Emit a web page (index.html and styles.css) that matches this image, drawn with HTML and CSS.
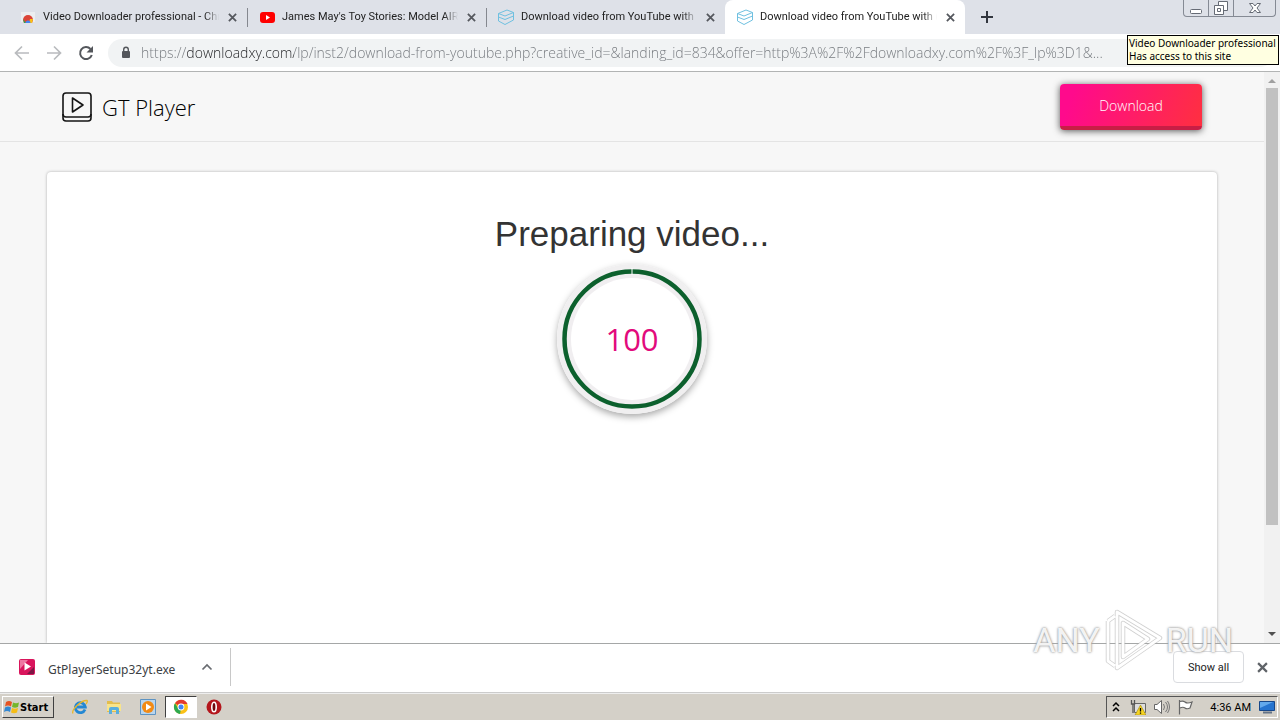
FILE: index.html
```html
<!DOCTYPE html>
<html lang="en">
<head>
<meta charset="utf-8">
<title>Download video from YouTube with GT Player</title>
<link rel="stylesheet" href="styles.css">
</head>
<body>
<svg class="defs" aria-hidden="true">
  <symbol id="x" viewBox="0 0 10 10"><path d="M1 1l8 8M9 1l-8 8" fill="none" stroke="currentColor" stroke-width="2"/></symbol>
  <symbol id="box" viewBox="0 0 16 16"><path d="M.5 4.500L9 1l6.500 2.500L7 7zM.5 4.500V8L7 10.500 15.500 7M.5 8v4L7 15.500l8.500-4.500V3.500" fill="none" stroke="#6fc0e0" stroke-width="1"/></symbol>
  <symbol id="chrome" viewBox="0 0 16 16"><circle cx="8" cy="8" r="7" fill="#fbc116"/><path d="M8 8L2 4.300A7 7 0 0 1 14.500 5H8z" fill="#e33b2e"/><path d="M2 4.300L5.500 10l2.500 0-1 5A7 7 0 0 1 2 4.300z" fill="#2da94f"/><circle cx="8" cy="8" r="3.400" fill="#fff"/><circle cx="8" cy="8" r="2.500" fill="#4285f4"/></symbol>
</svg>

<header class="tabstrip">
  <div class="tabs">
    <div class="tab">
      <svg class="favicon" viewBox="0 0 16 16"><path d="M1 3h14v10H1z" fill="#eceef0"/><path d="M3 11a5 5 0 0 1 10 0l-1 3H4z" fill="#db4437"/><path d="M3 10l3 4H4z" fill="#2da94f"/><path d="M10 10h3l-1 4H9z" fill="#fbc116"/><path d="M5.500 14a2.500 2.500 0 0 1 5 0z" fill="#4285f4"/></svg>
      <span class="tab-title">Video Downloader professional - Chr</span>
      <button class="tab-close" aria-label="Close tab"><svg><use href="#x"/></svg></button>
    </div>
    <div class="tab">
      <svg class="favicon" viewBox="0 0 16 16"><rect x="1" y="3" width="15" height="11" rx="3" fill="#f00"/><path d="M7 6l4 2.500L7 11z" fill="#fff"/></svg>
      <span class="tab-title">James May's Toy Stories: Model AIR</span>
      <button class="tab-close" aria-label="Close tab"><svg><use href="#x"/></svg></button>
    </div>
    <div class="tab tab-last">
      <svg class="favicon"><use href="#box"/></svg>
      <span class="tab-title">Download video from YouTube with (</span>
      <button class="tab-close" aria-label="Close tab"><svg><use href="#x"/></svg></button>
    </div>
    <div class="tab tab-active">
      <svg class="favicon"><use href="#box"/></svg>
      <span class="tab-title">Download video from YouTube with (</span>
      <button class="tab-close" aria-label="Close tab"><svg><use href="#x"/></svg></button>
    </div>
  </div>
  <button class="new-tab" aria-label="New tab"><svg viewBox="0 0 12 12"><path d="M6 0v12M0 6h12" stroke="#32363f" stroke-width="2"/></svg></button>
  <div class="window-controls">
    <button aria-label="Minimize"><svg viewBox="0 0 14 14"><rect x="1.500" y="8.500" width="11" height="4" rx="1" fill="#fff" stroke="#666b75"/></svg></button>
    <button aria-label="Restore"><svg viewBox="0 0 14 14"><g fill="#fff" stroke="#666b75"><path d="M4.500 .5h9v9h-9z"/><path d="M.5 4.500h9v9h-9z"/><path d="M3.500 7.500h3v3h-3z"/></g></svg></button>
    <button class="window-close" aria-label="Close"><svg viewBox="0 0 14 14"><path d="M1.500 2.500h3.500l2 2.500 2-2.500h3.500L9 7l3.500 4.500H9L7 9l-2 2.500H1.500L5 7z" fill="#fff" stroke="#666b75"/></svg></button>
  </div>
</header>

<nav class="toolbar">
  <button class="nav-button" aria-label="Back"><svg viewBox="0 0 16 16"><path d="M15 8H2M8 1.500L1.500 8 8 14.500" fill="none" stroke="#b9bbbe" stroke-width="1.700"/></svg></button>
  <button class="nav-button" aria-label="Forward"><svg viewBox="0 0 16 16"><path d="M1 8h13M8 1.500L14.500 8 8 14.500" fill="none" stroke="#b9bbbe" stroke-width="1.700"/></svg></button>
  <button class="nav-button" aria-label="Reload"><svg viewBox="0 0 16 16"><path d="M13.800 10A6 6 0 1 1 12.500 4" fill="none" stroke="#54575c" stroke-width="2"/><path d="M15 1v6.500H8.500z" fill="#54575c"/></svg></button>
  <div class="omnibox">
    <svg class="lock" viewBox="0 0 10 13"><rect x="1" y="5" width="8" height="7" rx="1" fill="#54575c"/><path d="M2.700 6V3.500a2.300 2.300 0 0 1 4.600 0V6" fill="none" stroke="#54575c" stroke-width="1.400"/></svg>
    <input class="url" type="text" aria-label="Address" value="https://downloadxy.com/lp/inst2/download-from-youtube.php?creative_id=&amp;landing_id=834&amp;offer=http%3A%2F%2Fdownloadxy.com%2F%3F_lp%3D1&amp;...">
  </div>
</nav>
<div class="tooltip" role="tooltip">Video Downloader professional<br>Has access to this site</div>

<div class="viewport">
  <main class="page">
    <div class="site-header">
      <div class="brand">
        <svg class="brand-icon" viewBox="0 0 30 30"><g fill="none" stroke="#151515" stroke-width="1.600" stroke-linejoin="round"><rect x="1" y="1" width="28" height="28" rx="3"/><path d="M1 22q0 3 3 3h22q3 0 3-3M10.500 6v14L21 13z"/></g></svg>
        <span>GT Player</span>
      </div>
      <button class="download">Download</button>
    </div>
    <section class="card">
      <h1>Preparing video...</h1>
      <div class="progress" role="progressbar" aria-label="Preparing video" aria-valuenow="100">
        <svg viewBox="0 0 150 150"><circle cx="75" cy="75" r="75" fill="#f0eff0"/><circle cx="75" cy="75" r="65" fill="#f0eef0"/><circle cx="75" cy="75" r="61" fill="#fff"/><circle cx="75" cy="75" r="67.500" fill="none" stroke="#0c602d" stroke-width="4.500"/><path d="M75 4v7" stroke="#fff"/></svg>
        <span class="percent">100</span>
      </div>
    </section>
  </main>
  <div class="scrollbar" aria-hidden="true">
    <svg viewBox="0 0 16 16"><path d="M4 11l4-4 4 4z" fill="#a0a0a0"/></svg>
    <div class="scroll-track"><div class="scroll-thumb"></div></div>
    <svg viewBox="0 0 16 16"><path d="M4 5l4 4 4-4z" fill="#505050"/></svg>
  </div>
</div>

<footer class="shelf">
  <div class="shelf-item">
    <svg class="file-icon" viewBox="0 0 16 16"><rect width="16" height="16" rx="2" fill="#d9155c"/><path d="M1 1h8L1 10z" fill="#ee77a2"/><path d="M8 15l7-7v7z" fill="#7d1745"/><path d="M5.500 3.500v8L12 7.500z" fill="#fff"/></svg>
    <span class="file-name">GtPlayerSetup32yt.exe</span>
    <button class="chevron" aria-label="File options"><svg viewBox="0 0 12 8"><path d="M1.500 6.500L6 2l4.500 4.500" fill="none" stroke="#686b70" stroke-width="1.700"/></svg></button>
  </div>
  <button class="show-all">Show all</button>
  <button class="shelf-close" aria-label="Close downloads bar"><svg><use href="#x"/></svg></button>
</footer>

<div class="taskbar">
  <button class="start"><svg viewBox="0 0 16 16"><path d="M2 3q3-2 6 0L7 7.500q-3-2-6 0z" fill="#e65322"/><path d="M9 3.500q3 1.500 6 0l-1 4.500q-3 1.500-6 0z" fill="#74b62b"/><path d="M1 8.500q3-2 6 0L6 13q-3-2-6 0z" fill="#3388d2"/><path d="M8 9q3 1.500 6 0l-1 4.500q-3 1.500-6 0z" fill="#f6bd16"/></svg>Start</button>
  <button class="task" aria-label="Internet Explorer"><svg viewBox="0 0 16 16"><path d="M13 10.500A5 5 0 1 1 13.300 8H5" fill="none" stroke="#2488d3" stroke-width="2.800"/><path d="M1 14.500C-1 11 9 1 15 1.500q1 1-1 3.500" fill="none" stroke="#e8b72b" stroke-width="1.300"/></svg></button>
  <button class="task" aria-label="Explorer"><svg viewBox="0 0 16 16"><path d="M1 2h5l1 1.500h7V13H1z" fill="#e3bd4d"/><path d="M1 5h14v7H1z" fill="#f8e48a"/><path d="M3 15V10q0-2 2-2h6q2 0 2 2v5h-3v-4H6v4z" fill="#58aede"/></svg></button>
  <button class="task" aria-label="Media Player"><svg viewBox="0 0 16 16"><path d="M.5.5h15v15H.5z" fill="#b9d5ed" stroke="#5d93c2"/><circle cx="8" cy="8" r="6" fill="#f28a14"/><path d="M6 4.500v7L11.500 8z" fill="#fff"/></svg></button>
  <button class="task task-active" aria-label="Chrome"><svg><use href="#chrome"/></svg></button>
  <button class="task" aria-label="Opera"><svg viewBox="0 0 16 16"><circle cx="8" cy="8" r="7.500" fill="#b4161c"/><ellipse cx="8" cy="8" rx="2.200" ry="4.800" fill="#70080c" stroke="#fff" stroke-width="1.600"/></svg></button>
  <div class="tray">
    <svg class="tray-more" viewBox="0 0 16 16"><path d="M5 7l3-3 3 3M5 12l3-3 3 3" fill="none" stroke="#000" stroke-width="1.500"/></svg>
    <svg viewBox="0 0 16 16"><path d="M4.500 4.500h11v9h-11z" fill="#ddd" stroke="#666"/><path d="M1.500 1v4h3V1M3 5v9" fill="none" stroke="#555" stroke-width="1.300"/><path d="M10.500 6l5.500 10H5z" fill="#f6d421" stroke="#907508" stroke-width=".5"/><path d="M10.500 9v3.500M10.500 13.500v1.300" stroke="#000" stroke-width="1.300"/></svg>
    <svg viewBox="0 0 16 16"><path d="M.5 5.500H3L7.500 1.500v13L3 10.500H.5z" fill="#fff" stroke="#666"/><path d="M9.500 5q2 3 0 6M11.500 3q4 5 0 10M13.500 2q4 6 0 12" fill="none" stroke="#777"/></svg>
    <svg viewBox="0 0 16 16"><path d="M1.500 1v14.500M2 2.500q3-1 5 .5 2 2 7 0l-2 6q-3 1.500-5 0-2-1.500-5 0" fill="#fff" stroke="#666" stroke-width="1.200"/></svg>
    <span class="clock">4:36 AM</span>
    <svg viewBox="0 0 16 16"><path d="M.5 2.500h15v9H.5z" fill="#2674cf" stroke="#174789"/><path d="M1 3h13L1 9z" fill="#63a9ec"/><path d="M4 13.500h9" stroke="#647386" stroke-width="2"/></svg>
  </div>
</div>

<div class="watermark" aria-hidden="true"><span>ANY</span><svg viewBox="0 0 60 64"><g fill="none" stroke-linejoin="round"><path d="M5 13v40l7 5M5 13l7-5M14 4L57 30 14 60zM20 15v34l25-18z" stroke="#aaa" stroke-width="4.500" opacity=".55"/><path d="M5 13v40l7 5M5 13l7-5M14 4L57 30 14 60zM20 15v34l25-18z" stroke="#fff" stroke-width="2.800"/></g></svg><span>RUN</span></div>
</body>
</html>
```
FILE: styles.css
```css
* { box-sizing: border-box; }
body {
  margin: 0;
  height: 100vh;
  display: flex;
  flex-direction: column;
  overflow: hidden;
  position: relative;
  background: #fff;
  font-family: Roboto, "Noto Sans", sans-serif;
  font-size: 11px;
  color: #222;
}
button { font: inherit; color: inherit; border: 0; background: none; padding: 0; }
svg { display: block; flex: none; width: 16px; height: 16px; }
.defs { position: absolute; width: 0; height: 0; }

.tabstrip { display: flex; height: 34px; flex: none; background: #dee1e8; padding-left: 8px; }
.tabs { display: flex; }
.tab { width: 239px; display: flex; align-items: center; gap: 7px; padding: 0 9px 0 12px; position: relative; }
.tab:not(.tab-last):not(.tab-active)::after { content: ""; position: absolute; right: -1px; top: 8px; height: 19px; width: 1px; background: #85888f; }
.tab-title { flex: 1; min-width: 0; white-space: nowrap; line-height: 18px; mask-image: linear-gradient(90deg, #000 92%, transparent); }
.tab-close { flex: none; width: 12px; height: 12px; color: #55585e; display: grid; place-items: center; }
.tab-close svg { width: 9px; height: 9px; }
.tab-active { background: #fff; border-radius: 8px 8px 0 0; width: 240px; }
.new-tab { width: 44px; display: grid; place-items: center; }
.new-tab svg { width: 12px; height: 12px; }
.window-controls { margin-left: auto; margin-right: 4px; height: 17px; display: flex; border: 1px solid #858a94; border-top: 0; border-radius: 0 0 4px 4px; }
.window-controls button { width: 25px; display: grid; place-items: center; border-right: 1px solid #858a94; }
.window-controls svg { width: 14px; height: 14px; }
.window-controls .window-close { width: 41px; border-right: 0; }

.toolbar { display: flex; align-items: center; height: 38px; flex: none; padding: 0 6px; border-bottom: 1px solid #b2b4b4; }
.nav-button { width: 32px; height: 32px; display: grid; place-items: center; }
.omnibox { flex: 1; display: flex; align-items: center; gap: 10px; height: 28px; margin-left: 6px; padding-left: 13px; border-radius: 14px; background: #f1f3f4; }
.lock { width: 10px; height: 13px; }
.url {
  flex: 1; border: 0; padding: 0; outline: 0;
  font-family: "Open Sans", "Noto Sans", sans-serif; font-size: 14px; font-weight: 300;
  color: #73777c;
  background: linear-gradient(90deg, #73777c 46px, #202124 46px, #202124 153px, #73777c 153px);
  background-clip: text; -webkit-background-clip: text; -webkit-text-fill-color: transparent;
}
.tooltip { position: absolute; right: 1px; top: 35px; width: 152px; padding: 1px; background: #ffffe1; border: 1px solid #000; color: #000; font-family: "Noto Sans", sans-serif; font-size: 10px; line-height: 13px; white-space: nowrap; }

.viewport { flex: 1; min-height: 0; display: flex; background: #f7f7f7; }
.page { flex: 1; overflow: hidden; display: flex; flex-direction: column; }
.site-header { height: 70px; flex: none; display: flex; justify-content: space-between; padding: 12px 62px; border-bottom: 1px solid #e4e4e4; }
.brand { display: flex; align-items: center; gap: 10px; height: 46px; font-family: "Open Sans", sans-serif; font-weight: 300; font-size: 22px; line-height: 46px; color: #000; }
.brand-icon { width: 30px; height: 30px; }
.download { width: 142px; height: 46px; border-radius: 4px; border-bottom: 4px solid #c81e45; background: linear-gradient(110deg, #ff0a8c 10%, #ff303f); background-origin: border-box; color: #fff; font-family: "Open Sans", sans-serif; font-size: 14px; font-weight: 300; box-shadow: 0 1px 7px #555; }
.card { flex: 1; margin: 30px 47px 0; padding-top: 38px; background: #fff; border-radius: 4px 4px 0 0; box-shadow: 0 0 3px #aaa; text-align: center; }
h1 { margin: 0; font: 400 35px/48px "Liberation Sans", Arial, sans-serif; color: #333; }
.progress { width: 150px; height: 150px; margin: 6px auto 0; display: grid; place-items: center; border-radius: 50%; box-shadow: 0 3px 7px #aaa; }
.progress > * { grid-area: 1 / 1; }
.progress svg { width: 150px; height: 150px; }
.percent { z-index: 1; font: 400 31px/40px "Open Sans", sans-serif; color: #e20a7c; }

.scrollbar { width: 16px; display: flex; flex-direction: column; background: #f1f1f1; }
.scroll-track { flex: 1; padding: 0 2px; }
.scroll-thumb { height: 81%; background: #c1c1c1; }

.shelf { height: 50px; flex: none; display: flex; align-items: center; padding: 0 10px 2px 19px; border-top: 1px solid #a5a7a7; border-bottom: 1px solid #ccc; }
.shelf-item { display: flex; align-items: center; height: 38px; width: 212px; border-right: 1px solid #c8c8c8; color: #3c4043; font-family: "Noto Sans", sans-serif; font-size: 12px; }
.file-name { margin-left: 13px; padding-top: 4px; }
.chevron { margin-left: auto; margin-right: 17px; }
.chevron svg { width: 12px; height: 8px; }
.show-all { margin-left: auto; width: 71px; height: 32px; border: 1px solid #dadce0; border-radius: 4px; }
.shelf-close { width: 16px; margin-left: 10px; display: grid; place-items: center; color: #5f6368; }
.shelf-close svg { width: 11px; height: 11px; }

.taskbar { height: 27px; flex: none; display: flex; align-items: center; padding: 2px; background: #d4d0c8; border-top: 1px solid #eee; }
.start { width: 52px; height: 22px; margin-right: 9px; display: flex; align-items: center; border: 1px solid; border-color: #fff #404040 #404040 #fff; font-family: "DejaVu Sans Condensed", sans-serif; font-weight: 700; font-size: 11px; color: #000; padding-left: 1px; }
.task { width: 34px; height: 22px; display: grid; place-items: center; }
.task-active { background: #fff; border: 1px solid; border-color: #404040 #fff #fff #404040; width: 32px; }
.tray { margin-left: auto; height: 22px; padding: 0 2px 0 1px; display: flex; align-items: center; gap: 8px; border: 1px solid; border-color: #555 #fff #fff #555; color: #000; }
.tray-more { margin-right: -2px; }
.clock { margin-left: 8px; white-space: nowrap; }

.watermark { position: absolute; right: 47px; top: 608px; display: flex; align-items: center; gap: 3px; pointer-events: none; font: 400 34px/64px Roboto, sans-serif; color: rgba(255, 255, 255, .9); text-shadow: 0 0 2px #999, 0 0 3px #aaa; }
.watermark svg { width: 60px; height: 64px; }
```
